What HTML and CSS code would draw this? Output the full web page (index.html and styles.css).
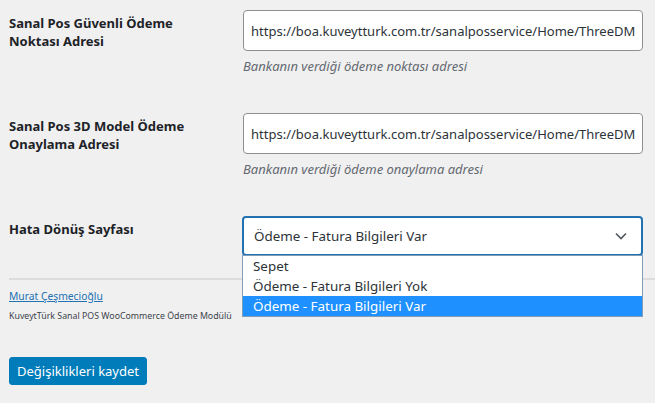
FILE: index.html
```html
<!DOCTYPE html>
<html lang="tr">
<head>
<meta charset="utf-8">
<title>KuveytTürk Sanal POS</title>
<link rel="stylesheet" href="styles.css">
</head>
<body>
<div class="wrap">
  <div class="form-table">
    <div class="row">
      <div class="label">Sanal Pos Güvenli Ödeme Noktası Adresi</div>
      <div class="field">
        <input class="text" type="text" value="https://boa.kuveytturk.com.tr/sanalposservice/Home/ThreeDModelPayGate">
        <p class="desc">Bankanın verdiği ödeme noktası adresi</p>
      </div>
    </div>
    <div class="row">
      <div class="label">Sanal Pos 3D Model Ödeme Onaylama Adresi</div>
      <div class="field">
        <input class="text" type="text" value="https://boa.kuveytturk.com.tr/sanalposservice/Home/ThreeDModelProvisionGate">
        <p class="desc">Bankanın verdiği ödeme onaylama adresi</p>
      </div>
    </div>
    <div class="row row-last">
      <div class="label">Hata Dönüş Sayfası</div>
      <div class="field select-field">
        <div class="select">
          <span>Ödeme - Fatura Bilgileri Var</span>
          <svg class="chev" width="12" height="8" viewBox="0 0 12 8"><path d="M1 1.5 L6 6.5 L11 1.5" fill="none" stroke="#50575e" stroke-width="1.6"/></svg>
        </div>
        <ul class="dropdown">
          <li>Sepet</li>
          <li>Ödeme - Fatura Bilgileri Yok</li>
          <li class="active">Ödeme - Fatura Bilgileri Var</li>
        </ul>
      </div>
    </div>
  </div>
  <hr class="sep">
  <a class="author" href="#">Murat Çeşmecioğlu</a>
  <p class="module">KuveytTürk Sanal POS WooCommerce Ödeme Modülü</p>
  <button class="primary" type="button">Değişiklikleri kaydet</button>
</div>
</body>
</html>
```

FILE: styles.css
```css
html, body {
  margin: 0;
  padding: 0;
  background: #f0f0f1;
}
body {
  font-family: "Noto Sans", "Open Sans", sans-serif;
  font-size: 13px;
  color: #1d2327;
}
.wrap {
  padding: 10px 0 0 9px;
}
.form-table {
  display: flex;
  flex-direction: column;
}
.row {
  display: grid;
  grid-template-columns: 234px 400px;
  margin-bottom: 37px;
}
.row-last {
  margin-bottom: 22px;
}
.label {
  width: 200px;
  font-weight: 700;
  font-size: 13px;
  line-height: 18px;
  padding-top: 4px;
  color: #1d2327;
}
.field {
  position: relative;
}
.text {
  box-sizing: border-box;
  display: block;
  width: 400px;
  height: 41px;
  margin: 0;
  padding: 0 7px;
  border: 1px solid #8c8f94;
  border-radius: 4px;
  background: #fff;
  font-family: inherit;
  font-size: 13px;
  color: #2c3338;
  outline: none;
}
.desc {
  margin: 5px 0 0;
  font-size: 13px;
  line-height: 20px;
  font-style: italic;
  color: #646970;
}
.select {
  box-sizing: border-box;
  height: 40px;
  width: 401px;
  margin-left: -1px;
  display: flex;
  align-items: center;
  justify-content: space-between;
  padding: 0 14px 0 10px;
  border: 2px solid #2271b1;
  border-radius: 4px;
  background: #fff;
  color: #2c3338;
  font-size: 13.4px;
}
.chev {
  display: block;
}
.dropdown {
  position: absolute;
  left: -1px;
  top: 39px;
  width: 401px;
  box-sizing: border-box;
  margin: 0;
  padding: 0;
  list-style: none;
  background: #fff;
  border: 1px solid #7f9db9;
  z-index: 5;
  font-size: 13.4px;
}
.dropdown li {
  height: 20px;
  line-height: 20px;
  padding-left: 10px;
  color: #2c3338;
}
.dropdown li.active {
  background: #1e90ff;
  color: #fff;
}
.sep {
  margin: 0;
  border: 0;
  border-top: 2px solid #dcdcde;
}
.author {
  display: inline-block;
  margin-top: 8px;
  font-size: 10.3px;
  line-height: 16px;
  color: #2271b1;
  text-decoration: underline;
}
.module {
  margin: 5px 0 0;
  font-size: 8.8px;
  line-height: 14px;
  color: #3c434a;
}
.primary {
  margin-top: 34px;
  height: 28px;
  padding: 0 7px;
  border: 1px solid #007cba;
  border-radius: 3px;
  background: #007cba;
  color: #fff;
  font-family: inherit;
  font-size: 13px;
  line-height: 26px;
  cursor: pointer;
}
```
